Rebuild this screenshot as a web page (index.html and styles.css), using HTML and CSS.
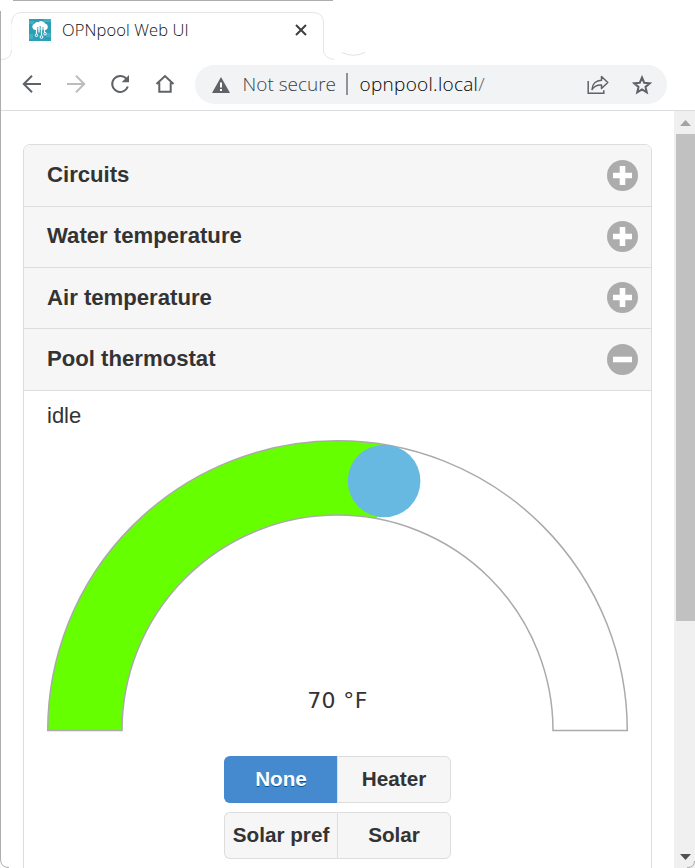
FILE: index.html
```html
<!DOCTYPE html>
<html lang="en">
<head>
<meta charset="utf-8">
<title>OPNpool Web UI</title>
<link rel="stylesheet" href="styles.css">
</head>
<body>
<div class="window">
  <svg class="outline" width="695" height="868" viewBox="0 0 695 868" fill="none">
    <path d="M13 .5H333M.5 11V859Q.5 867.5 9 867.5" stroke="#adadad"/>
    <path d="M694.5 861Q694.5 867.5 687 867.5" stroke="#adadad"/>
    <path d="M22 12.500H313M323.500 23V50" stroke="#e3e5e8"/>
    <path d="M1 59.500H3Q11.500 58 11.500 50M11.500 24Q11.500 12.500 22 12.500M313 12.500Q323.500 12.500 323.500 23M323.500 50Q323.500 58 334 59.500" stroke="#e3e5e8"/>
    <path d="M11.500 24V50" stroke="#f7f8f9"/>
    <path d="M342 52.500Q353 58 365 52.500" stroke="#e0e2e5"/>
  </svg>
  <header class="tabs">
    <svg class="favicon" width="22" height="22" viewBox="0 0 22 22">
      <path fill="#2c9fb6" d="M0 0h22v22H0z"/>
      <path fill="#42b0c3" d="M0 2h5v3H0zM15 0h7v3h-7zM0 15h4v5H0zM17 14h5v4h-5z"/>
      <path fill="#fff" d="M6 11a3.200 3.200 0 0 1-.5-6.200 3 3 0 0 1 4-1.500 4 4 0 0 1 6.600 1.300A3.300 3.300 0 0 1 16.500 11z"/>
      <path d="M7.500 10v5M10 10v3.500M12.500 10v6M15.500 10v3" stroke="#fff" stroke-width="1.200"/>
      <path d="M8.800 8v3M11.200 7v4M14 8v3" stroke="#329fb2" stroke-width=".9"/>
      <g fill="none" stroke="#fff"><circle cx="7.500" cy="16.300" r="1.300"/><circle cx="12.500" cy="18" r="1.400"/><circle cx="16" cy="14.700" r="1.300"/></g>
    </svg>
    <span class="tab-title">OPNpool Web UI</span>
    <svg class="close" width="12" height="12" viewBox="0 0 12 12"><path d="M1 1l10 10M11 1L1 11" stroke="#3c4043" stroke-width="2"/></svg>
  </header>
  <nav class="toolbar">
    <svg width="20" height="20" viewBox="0 0 20 20" class="nav-icon"><path d="M19 10H2M10 1.800L1.800 10l8.200 8.200"/></svg>
    <svg width="20" height="20" viewBox="0 0 20 20" class="nav-icon muted"><path d="M1 10h17M10 1.800l8.200 8.200-8.200 8.200"/></svg>
    <svg width="20" height="20" viewBox="0 0 20 20" class="nav-icon"><path d="M16.300 4.700A8 8 0 1 0 17.800 12.500"/><path d="M19 1v7.300h-7.300z" fill="#5f6368" stroke="none"/></svg>
    <svg width="20" height="20" viewBox="0 0 20 20" class="nav-icon"><path d="M1.500 10L10 2l8.500 8M4.300 8.500v9.300h11.400V8.500"/></svg>
    <div class="address">
      <svg width="18" height="16" viewBox="0 0 18 16"><path fill="#5f6368" d="M9 0l9 16H0z"/><path fill="#fff" d="M8 5.500h2v5H8zM8 12h2v2H8z"/></svg>
      <span class="security">Not secure</span>
      <i class="divider"></i>
      <span class="host">opnpool.local<span class="slash">/</span></span>
      <svg class="share" width="22" height="20" viewBox="0 0 22 20" fill="none" stroke="#5f6368" stroke-width="1.500"><path d="M1.200 6v12.200h15.600v-3"/><path stroke-linejoin="round" d="M5 14.500C5.300 9 9 5.500 14.500 5.300V1.500l6.300 6-6.300 6V10C10 9.700 7.200 11.300 5 14.500z"/></svg>
      <svg class="star" width="20" height="20" viewBox="0 0 20 20"><path d="M10 2.500l2.200 5.200 5.600.5-4.300 3.700 1.300 5.500L10 14.500l-4.800 2.900 1.300-5.500-4.300-3.700 5.600-.5z" fill="none" stroke="#5f6368" stroke-width="2"/></svg>
    </div>
  </nav>
  <div class="viewport">
    <main class="content">
      <section class="accordion">
        <h2 class="row">Circuits<svg class="toggle" viewBox="0 0 31 31"><circle cx="15.500" cy="15.500" r="15.500"/><path d="M6 15.500h19M15.500 6v19"/></svg></h2>
        <h2 class="row short">Water temperature<svg class="toggle" viewBox="0 0 31 31"><circle cx="15.500" cy="15.500" r="15.500"/><path d="M6 15.500h19M15.500 6v19"/></svg></h2>
        <h2 class="row short lower">Air temperature<svg class="toggle" viewBox="0 0 31 31"><circle cx="15.500" cy="15.500" r="15.500"/><path d="M6 15.500h19M15.500 6v19"/></svg></h2>
        <h2 class="row">Pool thermostat<svg class="toggle" viewBox="0 0 31 31"><circle cx="15.500" cy="15.500" r="15.500"/><path d="M6 15.500h19"/></svg></h2>
        <div class="panel">
          <div class="status">idle</div>
          <div class="gauge">
            <svg width="581" height="292" viewBox="0 0 581 292">
              <path fill="#6f0" d="M.75 290.500A289.750 289.750 0 0 1 343.800 5.700L330 78.600A215.500 215.500 0 0 0 75 290.500z"/>
              <path fill="none" stroke="#aaa" stroke-width="1.500" d="M.75 290.500A289.750 289.750 0 0 1 580.250 290.500H506A215.500 215.500 0 0 0 75 290.500z"/>
              <circle cx="337.100" cy="41" r="36.300" fill="#67b9e2"/>
            </svg>
            <span class="reading">70 °F</span>
          </div>
          <div class="buttons"><button class="on">None</button><button>Heater</button></div>
          <div class="buttons"><button>Solar pref</button><button>Solar</button></div>
        </div>
      </section>
    </main>
    <aside class="scrollbar">
      <svg width="11" height="6" viewBox="0 0 11 6"><path fill="#a3a3a3" d="M0 6L5.500 0 11 6z"/></svg>
      <div class="thumb"></div>
      <svg class="down" width="11" height="6" viewBox="0 0 11 6"><path fill="#505050" d="M0 0h11L5.500 6z"/></svg>
    </aside>
  </div>
</div>
</body>
</html>
```
FILE: styles.css
```css
* { box-sizing: border-box; }
body { margin: 0; background: #fff; color: #333; font-family: "Liberation Sans", Arial, sans-serif; overflow: hidden; }
.window { position: relative; width: 695px; height: 868px; display: flex; flex-direction: column; overflow: hidden; }
.outline { position: absolute; left: 0; top: 0; z-index: 1; pointer-events: none; }
.tabs { height: 60px; width: 323px; display: flex; align-items: center; padding: 13px 16px 0 29px; flex: none; }
.favicon { margin-top: -13px; margin-right: 11px; }
.tab-title { font: 300 16.500px/24px "Open Sans", sans-serif; letter-spacing: .1px; color: #101214; margin-top: -1px; white-space: nowrap; position: relative; top: -6px; }
.close { margin: -13px 0 0 auto; }
.toolbar { height: 51px; flex: none; display: flex; align-items: flex-start; padding: 5px 28px 0 22px; border-bottom: 1px solid #dadce0; }
.nav-icon { flex: none; margin-top: 9px; margin-right: 24.200px; fill: none; stroke: #5f6368; stroke-width: 2; }
.muted { stroke: #babcbe; }
.nav-icon:nth-child(4) { margin-right: 20px; }
.address { height: 39px; flex: 1; display: flex; align-items: center; background: #f1f3f4; border-radius: 20px; padding: 0 15px 0 17px; font: 300 19px/28px "Open Sans", sans-serif; white-space: nowrap; }
.address svg { flex: none; }
.security { width: 93px; margin-left: 13px; color: #3c4045; position: relative; top: -1px; }
.divider { width: 2px; height: 22px; margin: 0 12px 0 10px; background: #919496; position: relative; top: -1px; }
.host { color: #000; position: relative; top: -1px; letter-spacing: .28px; }
.slash { color: #5f6368; }
.share { margin-left: auto; }
.star { margin-left: 23px; }
.viewport { flex: 1; min-height: 0; display: flex; }
.content { flex: 1; min-width: 0; padding: 33px 22px 0 23px; }
.accordion { height: 760px; border: 1px solid #ddd; border-radius: 7px; }
.row { height: 62px; margin: 0; padding: 0 13px 2px 23px; display: flex; align-items: center; justify-content: space-between; border-bottom: 1px solid #ddd; background: #f6f6f6; font-size: 22.150px; line-height: 28px; font-weight: 700; }
.row:first-child { border-radius: 6px 6px 0 0; }
.short { height: 61px; }
.lower { padding-bottom: 0; }
.toggle { width: 31px; height: 31px; flex: none; margin-top: 1px; fill: #acacac; stroke: #fff; stroke-width: 5.600px; }
.toggle circle { stroke: none; }
.lower .toggle { margin-top: -1px; }
.panel { padding: 11px 23px 0; }
.status { font-size: 22px; line-height: 28px; height: 38px; }
.gauge { position: relative; height: 292px; margin-bottom: 24px; }
.gauge svg { display: block; }
.reading { position: absolute; left: 0; width: 100%; top: 247px; text-align: center; font: 22px/28px "DejaVu Sans", sans-serif; letter-spacing: .4px; }
.buttons { display: flex; width: 227px; height: 47px; margin: 0 auto 9px; }
button { flex: 0 0 114px; padding: 0 0 2px; border: 1px solid #ddd; border-radius: 0 6px 6px 0; background: #f6f6f6; color: #333; font: 700 20.700px/24px "Liberation Sans", Arial, sans-serif; white-space: nowrap; }
button:first-child { flex-basis: 113px; border-right: 0; border-radius: 6px 0 0 6px; }
button.on { background: #458ace; border-color: #458ace; color: #fff; text-shadow: 0 1px 0 #059; }
.scrollbar { width: 21px; flex: none; background: #f0f0f0; display: flex; flex-direction: column; align-items: center; padding: 9px 0 8px 2px; }
.scrollbar svg { flex: none; }
.thumb { width: 19px; height: 487px; margin-top: 8px; background: #c1c1c1; }
.down { margin-top: auto; }
```
